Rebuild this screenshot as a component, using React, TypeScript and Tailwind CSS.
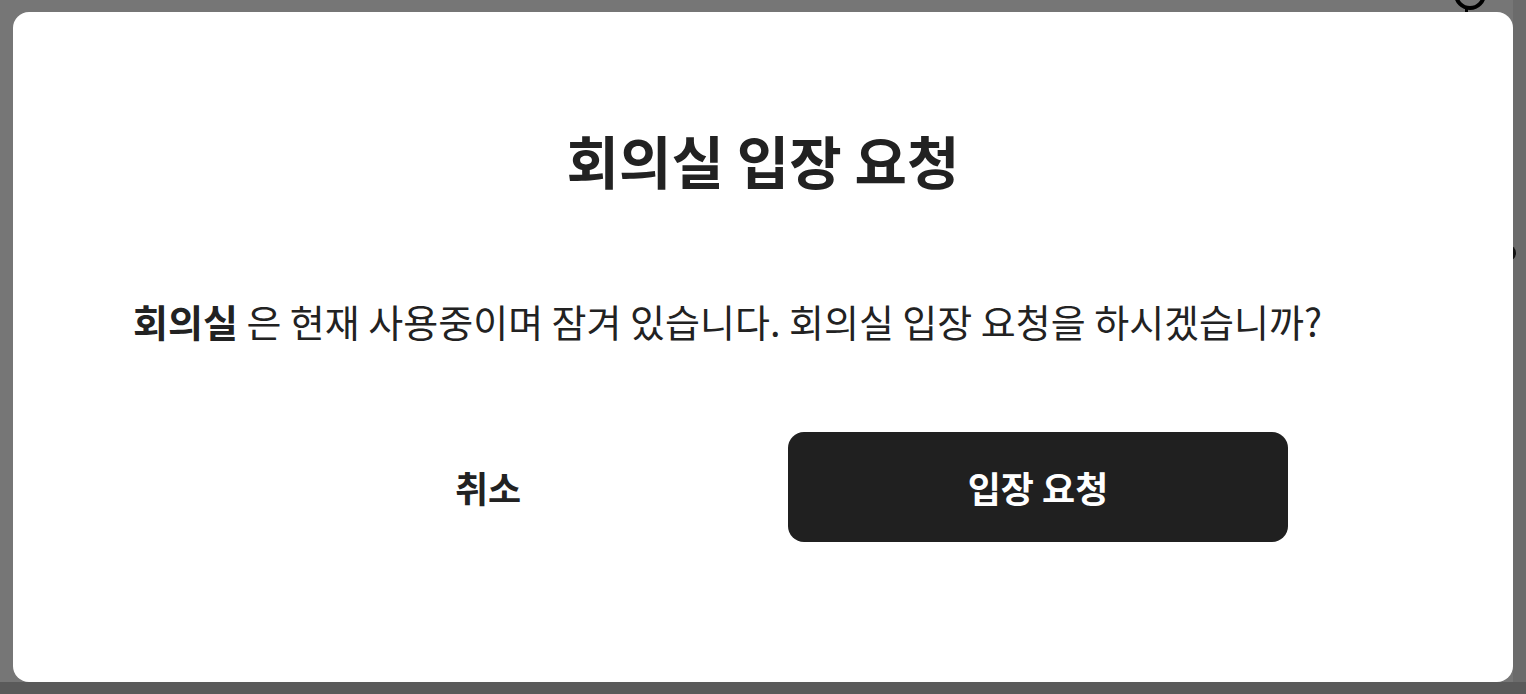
import React from 'react'

const font = { fontFamily: '"Noto Sans CJK KR", "Noto Sans", sans-serif' }

export default function App() {
  return (
    <div
      className="relative h-[694px] w-[1526px] overflow-hidden bg-[#767676] pl-[13px] pt-[12px]"
      style={font}
    >
      {/* page behind the overlay */}
      <div className="absolute right-0 top-0 h-[682px] w-[13px] bg-[#6b6b6b]" />
      <div className="absolute bottom-0 left-0 h-[12px] w-full bg-[#5a5a5a]" />
      <div className="absolute right-[40px] top-[-22px] h-[32px] w-[32px] rounded-full border-[4px] border-black" />
      <div className="absolute right-[58px] top-[8px] h-[4px] w-[3px] bg-black" />
      <div className="absolute right-[10px] top-[245px] h-[16px] w-[16px] rounded-full bg-[#111]" />

      <div className="relative flex h-[670px] w-[1500px] flex-col items-center rounded-[16px] bg-white">
        <h1 className="mt-[113px] text-[57px] font-semibold leading-[68px] text-[#222]">
          회의실 입장 요청
        </h1>
        <p className="mt-[103px] w-full pl-[120px] text-[38px] leading-[50px] text-[#222]">
          <span className="font-bold">회의실</span> 은 현재 사용중이며 잠겨 있습니다. 회의실 입장 요청을
          하시겠습니까?
        </p>
        <div className="mt-[86px] flex gap-[50px]">
          <button className="h-[110px] w-[500px] rounded-[16px] bg-white text-[36px] font-semibold text-[#222]">
            취소
          </button>
          <button className="h-[110px] w-[500px] rounded-[16px] bg-[#202020] text-[36px] font-semibold text-white">
            입장 요청
          </button>
        </div>
      </div>
    </div>
  )
}
